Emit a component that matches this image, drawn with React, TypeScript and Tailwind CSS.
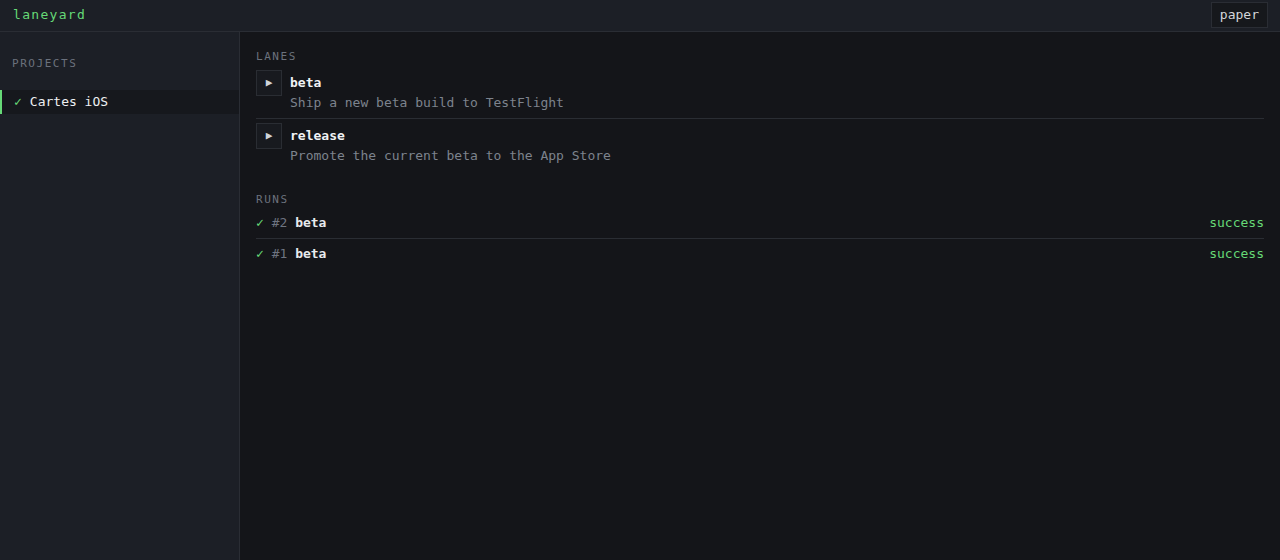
import React from 'react';

const mono = "font-['DejaVu_Sans_Mono','Liberation_Mono',monospace]";

const lanes = [
  { name: 'beta', desc: 'Ship a new beta build to TestFlight' },
  { name: 'release', desc: 'Promote the current beta to the App Store' },
];

const runs = [
  { id: 2, lane: 'beta', status: 'success' },
  { id: 1, lane: 'beta', status: 'success' },
];

export default function App() {
  return (
    <div className={`${mono} h-[560px] flex flex-col bg-[#141519] text-[13px] text-[#e6e8eb]`}>
      {/* Header */}
      <header className="h-8 shrink-0 flex items-center justify-between pl-[13px] pr-3 pb-[2px] bg-[#1c1f26] border-b border-[#2a2d34]">
        <span className="text-[#66d977] tracking-[0.1em] leading-5">laneyard</span>
        <button className="px-2 py-[2px] leading-5 border border-[#2a2d34] bg-[#16181c] text-[#d4d6da]">paper</button>
      </header>

      <div className="flex flex-1 min-h-0">
        {/* Sidebar */}
        <aside className="w-[240px] shrink-0 bg-[#1c1f26] border-r border-[#2a2d34] pt-[24px]">
          <div className="px-3 text-[11px] leading-4 tracking-[0.14em] text-[#6b717c]">PROJECTS</div>
          <div className="mt-[18px] h-6 flex items-center pl-3 border-l-2 border-[#66d977] bg-[#16181d]">
            <span className="text-[#66d977]">✓</span>
            <span className="ml-[8px] text-[#eef0f2]">Cartes iOS</span>
          </div>
        </aside>

        {/* Main */}
        <main className="flex-1 px-4 pt-[17px]">
          <div className="text-[11px] leading-4 tracking-[0.14em] text-[#6b717c] mb-px">LANES</div>
          <div>
            {lanes.map((lane, i) => (
              <div key={lane.name} className={`flex gap-2 pt-[6px] pb-[5px] ${i < lanes.length - 1 ? 'border-b border-[#2a2d33]' : ''}`}>
                <button className="w-[26px] h-[26px] -mt-[2px] shrink-0 flex items-center justify-center border border-[#2a2d33] bg-[#181a1f] text-[#cfd3d8] text-[11px]">
                  ▶
                </button>
                <div className="pt-px">
                  <div className="leading-5 font-bold text-[#f0f2f4]">{lane.name}</div>
                  <div className="leading-5 text-[#7d838d]">{lane.desc}</div>
                </div>
              </div>
            ))}
          </div>

          <div className="mt-[21px] text-[11px] leading-4 tracking-[0.14em] text-[#6b717c]">RUNS</div>
          <div>
            {runs.map((run, i) => (
              <div key={run.id} className={`flex items-center justify-between pt-[5px] pb-[5px] ${i < runs.length - 1 ? 'border-b border-[#2a2d33]' : ''}`}>
                <div className="leading-5">
                  <span className="text-[#66d977]">✓</span>{' '}
                  <span className="text-[#6e7480]">#{run.id}</span>{' '}
                  <span className="font-bold text-[#e8eaed]">{run.lane}</span>
                </div>
                <span className="leading-5 text-[#66d977]">{run.status}</span>
              </div>
            ))}
          </div>
        </main>
      </div>
    </div>
  );
}
